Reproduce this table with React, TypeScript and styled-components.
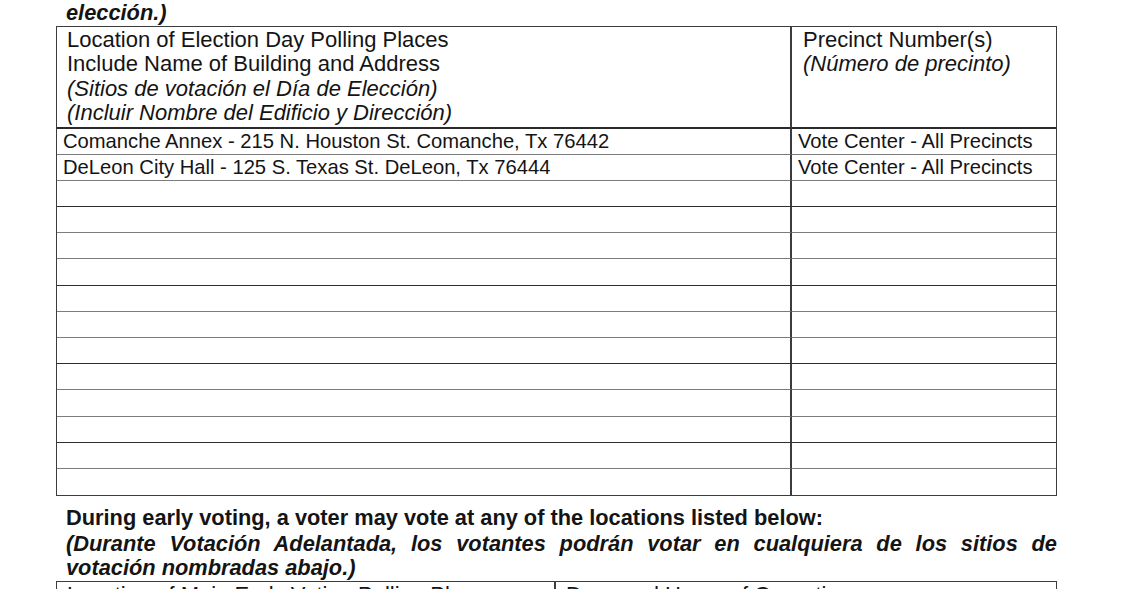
import React from "react";
import styled, { createGlobalStyle } from "styled-components";

const GlobalStyle = createGlobalStyle`
  html, body {
    margin: 0;
    padding: 0;
    background: #fff;
  }
  body {
    font-family: "Liberation Sans", Arial, sans-serif;
    color: #141414;
    overflow: hidden;
  }
`;

const Page = styled.div`
  width: 1001px;
  padding-left: 56px;
  height: 589px;
  overflow: hidden;
`;

const Lead = styled.p`
  margin: 0;
  padding: 1px 0 0 10px;
  font-size: 21.8px;
  line-height: 24.5px;
  font-weight: bold;
  text-align: ${(p) => (p.$justify ? "justify" : "left")};
  font-style: ${(p) => (p.$plain ? "normal" : "italic")};
`;

const Table = styled.div`
  display: grid;
  grid-template-columns: ${(p) => p.$cols};
  border: 1px solid #3c3c3c;
  margin-top: ${(p) => p.$top || "0px"};
`;

const HeadCell = styled.div`
  height: ${(p) => p.$h || "102px"};
  padding: 1px 0 0 ${(p) => p.$pad || "10px"};
  font-size: 22px;
  line-height: 24.6px;
  border-right: ${(p) => (p.$last ? "none" : "2px solid #3c3c3c")};
  border-bottom: 2px solid #2a2a2a;
  box-sizing: border-box;
  overflow: hidden;
  white-space: nowrap;
`;

const Em = styled.span`
  font-style: italic;
`;

const Cell = styled.div`
  height: 26.2px;
  box-sizing: border-box;
  padding: 0 0 0 ${(p) => p.$pad};
  font-size: 20.2px;
  line-height: 25px;
  white-space: nowrap;
  border-right: ${(p) => (p.$last ? "none" : "2px solid #3c3c3c")};
  border-bottom: ${(p) =>
    p.$end ? "none" : p.$dark ? "1.5px solid #2e2e2e" : "1px solid #7c7c7c"};
`;

const Notice = styled.div`
  margin-top: 9px;
`;

const rows = [
  ["Comanche Annex - 215 N. Houston St. Comanche, Tx 76442", "Vote Center - All Precincts"],
  ["DeLeon City Hall - 125 S. Texas St. DeLeon, Tx 76444", "Vote Center - All Precincts"],
  ...Array.from({ length: 12 }, () => ["", ""]),
];

export default function App() {
  return (
    <>
      <GlobalStyle />
      <Page>
        <Lead>elección.)</Lead>
        <Table $cols="735px 264px">
          <HeadCell>
            Location of Election Day Polling Places
            <br />
            Include Name of Building and Address
            <br />
            <Em>(Sitios de votación el Día de Elección)</Em>
            <br />
            <Em>(Incluir Nombre del Edificio y Dirección)</Em>
          </HeadCell>
          <HeadCell $last $pad="11px">
            Precinct Number(s)
            <br />
            <Em>(Número de precinto)</Em>
          </HeadCell>
          {rows.map(([place, precinct], i) => {
            const dark = (i + 1) % 3 === 0;
            const end = i === rows.length - 1;
            return (
              <React.Fragment key={i}>
                <Cell $pad="6px" $dark={dark} $end={end}>
                  {place}
                </Cell>
                <Cell $pad="6px" $last $dark={dark} $end={end}>
                  {precinct}
                </Cell>
              </React.Fragment>
            );
          })}
        </Table>
        <Notice>
          <Lead $plain>
            During early voting, a voter may vote at any of the locations listed below:
          </Lead>
          <Lead $justify>
            (Durante Votación Adelantada, los votantes podrán votar en cualquiera de los sitios de
            votación nombradas abajo.)
          </Lead>
        </Notice>
        <Table $cols="499px 500px">
          <HeadCell $h="40px">Location of Main Early Voting Polling Place</HeadCell>
          <HeadCell $h="40px" $last>
            Days and Hours of Operation
          </HeadCell>
        </Table>
      </Page>
    </>
  );
}
